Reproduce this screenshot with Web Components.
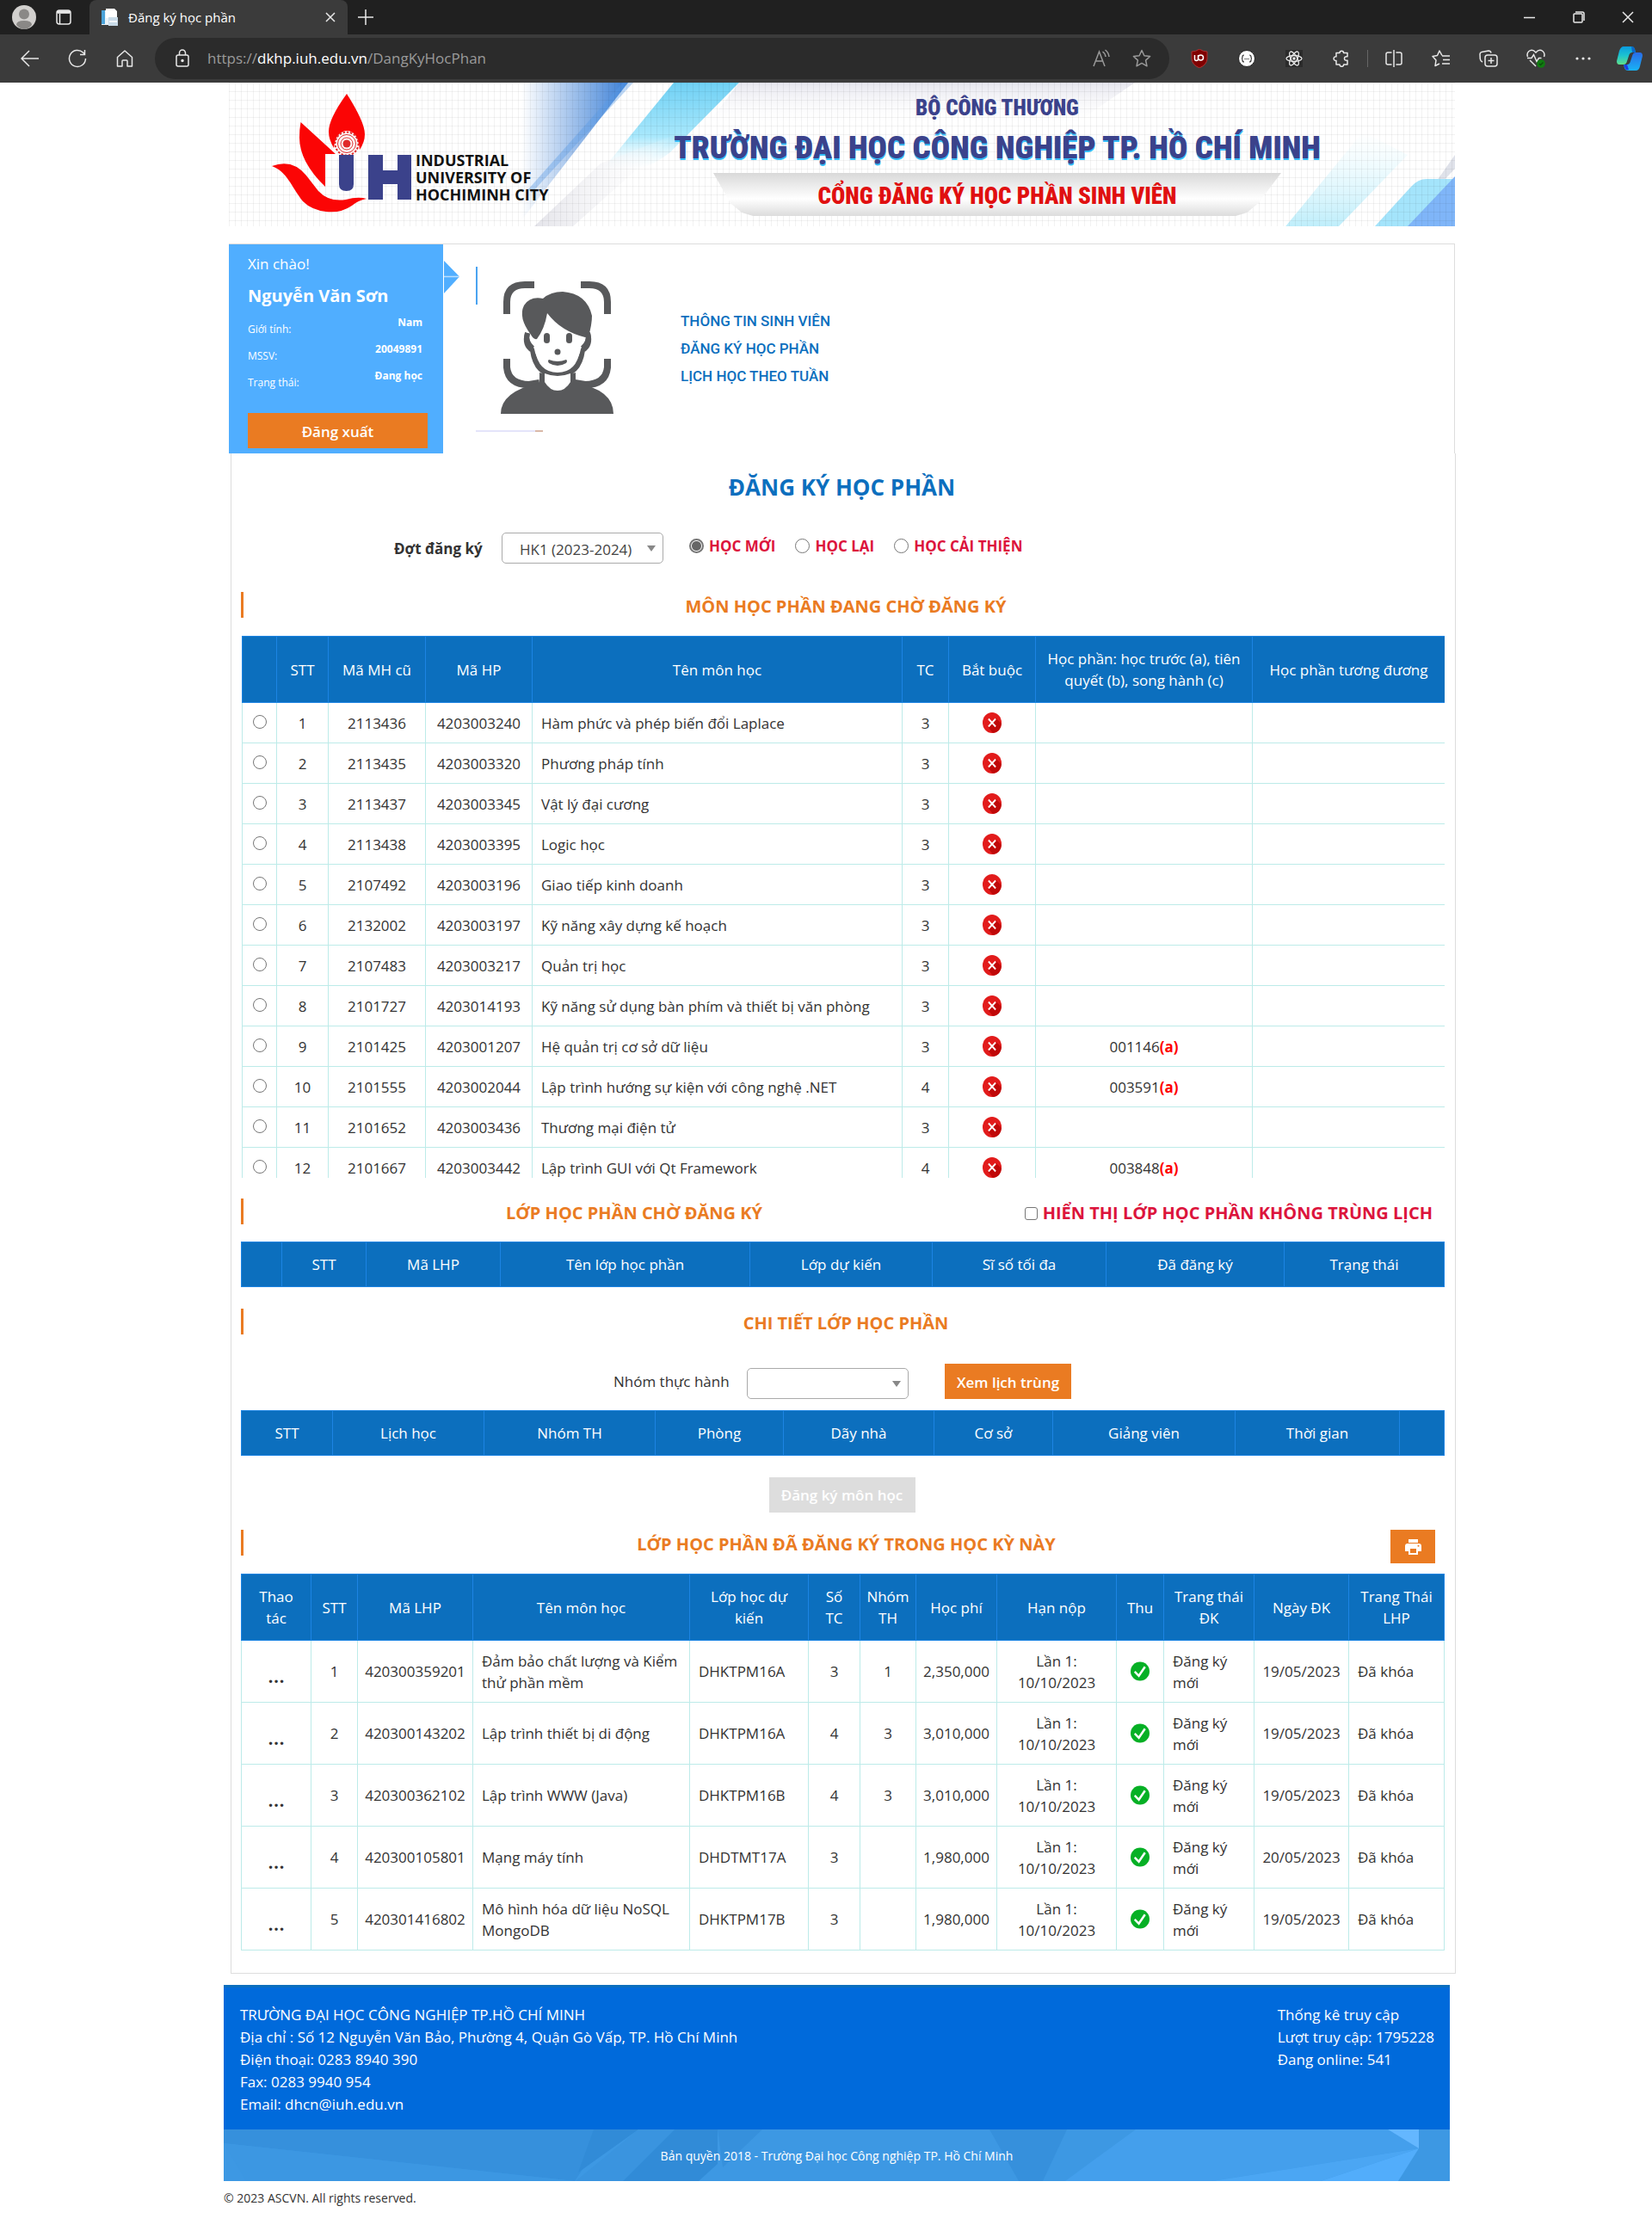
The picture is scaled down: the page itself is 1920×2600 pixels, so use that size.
<!DOCTYPE html>
<html lang="vi">
<head>
<meta charset="utf-8">
<title>Đăng ký học phần</title>
<meta name="viewport" content="width=device-width, initial-scale=1">
<style>
  body { margin: 0; background: #fff; color: #333; font: 17px/25px "Open Sans", "Noto Sans", sans-serif; }
  .page { padding-left: 32px; }
  .site { max-width: 1432px; margin: 0 auto; }
</style>
</head>
<body>
<browser-bar></browser-bar>
<div class="page">
  <div class="site">
    <uni-banner></uni-banner>
    <student-panel name="Nguyễn Văn Sơn" gender="Nam" code="20049891" status="Đang học"></student-panel>
    <main-frame>
      <page-title>ĐĂNG KÝ HỌC PHẦN</page-title>
      <term-filter></term-filter>
      <section-title>MÔN HỌC PHẦN ĐANG CHỜ ĐĂNG KÝ</section-title>
      <course-list></course-list>
      <section-title class="split">LỚP HỌC PHẦN CHỜ ĐĂNG KÝ
        <overlap-toggle slot="end">HIỂN THỊ LỚP HỌC PHẦN KHÔNG TRÙNG LỊCH</overlap-toggle>
      </section-title>
      <class-list></class-list>
      <section-title class="after-grid">CHI TIẾT LỚP HỌC PHẦN</section-title>
      <group-filter></group-filter>
      <class-detail></class-detail>
      <register-action>Đăng ký môn học</register-action>
      <section-title class="compact">LỚP HỌC PHẦN ĐÃ ĐĂNG KÝ TRONG HỌC KỲ NÀY
        <print-button slot="end"></print-button>
      </section-title>
      <registered-list></registered-list>
    </main-frame>
    <site-footer></site-footer>
  </div>
</div>

<script>
const define = (name, html, setup) => {
  const template = document.createElement('template');
  template.innerHTML = html;
  customElements.define(name, class extends HTMLElement {
    constructor() {
      super();
      this.attachShadow({ mode: 'open' }).append(template.content.cloneNode(true));
    }
    connectedCallback() { if (setup) setup(this, this.shadowRoot); }
  });
};

/* ---------- browser window ---------- */
define('browser-bar', `
<style>
  :host { display: block; background: #3b3b3b; color: #fff; font-size: 15px; line-height: 20px; }
  svg { display: block; fill: none; stroke: #e8e8e8; stroke-width: 1.5; flex: none; }
  button { all: unset; display: flex; align-items: center; justify-content: center; flex: none; }
  .tabs { display: flex; height: 40px; background: #202020; align-items: center; }
  .lead { display: flex; width: 104px; gap: 23px; padding-left: 14px; box-sizing: border-box; align-items: center; }
  .tab { display: flex; align-items: center; width: 300px; height: 40px; box-sizing: border-box; padding: 0 12px 0 13px; gap: 12px; background: #3b3b3b; border-radius: 8px 8px 0 0; }
  .tab span { flex: 1; }
  .new { width: 42px; height: 40px; }
  .win { margin-left: auto; display: flex; }
  .win button { width: 57px; height: 40px; }
  .tools { display: flex; align-items: center; height: 56px; }
  .nav { display: flex; width: 180px; box-sizing: border-box; padding-left: 7px; }
  .nav button { width: 55px; height: 48px; }
  form { display: flex; flex: 1; min-width: 0; height: 48px; margin: 0; border-radius: 24px; background: #2b2b2b; align-items: center; padding: 0 21px 0 20px; box-sizing: border-box; }
  .url { flex: 1; min-width: 0; display: flex; margin-left: 17px; font-size: 17px; line-height: 24px; color: #9a9a9a; }
  .url b { font-weight: 400; color: #fff; }
  .mini { display: flex; gap: 24px; }
  .mini svg { stroke: #9a9a9a; }
  .ext { display: flex; align-items: center; padding-left: 7px; }
  .ext button { width: 55px; height: 48px; }
  .ext .edge { width: 53px; }
  .sep { width: 1px; height: 20px; background: #666; margin: 0 2px 0 3px; }
</style>
<div class="tabs">
  <div class="lead">
    <svg width="28" height="28" viewBox="0 0 28 28" stroke="none"><circle cx="14" cy="14" r="14" fill="#d2d0ce" stroke="none"/><circle cx="14" cy="10.500" r="6" fill="#8a8886" stroke="none"/><path d="M5 23q0-5 9-5t9 5q-4 5-9 5t-9-5z" fill="#8a8886" stroke="none"/></svg>
    <svg width="18" height="18" viewBox="0 0 18 18"><rect x="1" y="1" width="16" height="16" rx="3"/><path d="M1 3.500h16M4.500 5v12" stroke-width="1.500"/><path d="M2 3h14" stroke-width="3.500"/></svg>
  </div>
  <div class="tab">
    <svg width="20" height="20" viewBox="0 0 20 20" stroke="none"><path d="M1 2h15v17H1z" fill="#e9f2f8" stroke="none"/><path d="M1 2h4v16H1z" fill="#4ba3d9" stroke="none"/><path d="M6 0h10l3 3v8H6z" fill="#fff" stroke="none"/><path d="M9 10h11v10H9z" fill="#c9dbe8" stroke="none"/><path d="M10 15h9" stroke="#fff"/></svg>
    <span>Đăng ký học phần</span>
    <button aria-label="Đóng thẻ"><svg width="16" height="16" viewBox="0 0 16 16"><path d="M3 3l10 10M13 3L3 13"/></svg></button>
  </div>
  <button class="new" aria-label="Thẻ mới"><svg width="18" height="18" viewBox="0 0 18 18"><path d="M9 0v18M0 9h18"/></svg></button>
  <div class="win">
    <button aria-label="Thu nhỏ"><svg width="13" height="13" viewBox="0 0 13 13"><path d="M0 6.500h13"/></svg></button>
    <button aria-label="Phóng to"><svg width="14" height="14" viewBox="0 0 14 14"><rect x="1" y="3" width="10" height="10" rx="1"/><path d="M3 1h8q2 0 2 2v8"/></svg></button>
    <button aria-label="Đóng"><svg width="14" height="14" viewBox="0 0 14 14"><path d="M1 1l12 12M13 1L1 13"/></svg></button>
  </div>
</div>
<div class="tools">
  <div class="nav">
    <button aria-label="Quay lại"><svg width="22" height="20" viewBox="0 0 22 20"><path d="M21 10H1M10 1l-9 9 9 9"/></svg></button>
    <button aria-label="Tải lại"><svg width="22" height="22" viewBox="0 0 22 22"><path d="M20.500 11a9.500 9.500 0 1 1-3-7l2 2M19.500 1v5.500H14"/></svg></button>
    <button aria-label="Trang chủ"><svg width="20" height="20" viewBox="0 0 20 20"><path d="M1.500 8.500 10 1l8.500 7.500V19H13v-6q0-1-1-1H8q-1 0-1 1v6H1.500z" stroke-linejoin="round"/></svg></button>
  </div>
  <form onsubmit="return false">
    <svg width="24" height="22" viewBox="0 0 24 22"><rect x="5" y="7" width="14" height="13" rx="2"/><path d="M8.500 7V4.500a3.500 3.500 0 0 1 7 0V7"/><circle cx="12" cy="13.500" r="1" fill="#e8e8e8"/></svg>
    <div class="url"><span>https://</span><b>dkhp.iuh.edu.vn</b><span>/DangKyHocPhan</span></div>
    <div class="mini">
      <svg width="25" height="22" viewBox="0 0 25 22"><path d="M4 20 10.500 3 17 20M6.500 14h8"/><path d="M14.500 3q3 2 3.500 6M17.500 1q4 3 4.500 8"/></svg>
      <svg width="22" height="22" viewBox="0 0 22 22"><path d="M11 1.500l2.900 6.200 6.700.8-5 4.600 1.400 6.700-6-3.400-6 3.400 1.400-6.700-5-4.600 6.700-.8z" stroke-linejoin="round"/></svg>
    </div>
  </form>
  <div class="ext">
    <button aria-label="uBlock"><svg width="20" height="22" viewBox="0 0 20 22"><path d="M10 0q4 3 9 3v8q0 7-9 11-9-4-9-11V3q5 0 9-3z" fill="#800000" stroke="#a33" stroke-width="1"/><path d="M4.500 7v4.500q0 2 2 2t2-2V7M8.500 10a3 3 0 1 0 6 0 3 3 0 1 0-6 0" stroke="#fff" stroke-width="1.500"/></svg></button>
    <button aria-label="Json"><svg width="20" height="20" viewBox="0 0 20 20"><circle cx="10" cy="10" r="9.500" fill="#fff" stroke="#222" stroke-width="1"/><path d="M7 6q-2 0-2 2t-1 2q1 0 1 2t2 2M13 6q2 0 2 2t1 2q-1 0-1 2t-2 2" stroke="#333" stroke-width="1.200"/><path d="M7.500 10.500h5" stroke="#333" stroke-dasharray="1 1"/></svg></button>
    <button aria-label="React"><svg width="20" height="20" viewBox="0 0 20 20"><rect width="20" height="20" fill="#2b2b2b" stroke="none"/><g stroke-width="1.300"><ellipse cx="10" cy="10" rx="9" ry="3.500"/><ellipse cx="10" cy="10" rx="9" ry="3.500" transform="rotate(60 10 10)"/><ellipse cx="10" cy="10" rx="9" ry="3.500" transform="rotate(120 10 10)"/></g><circle cx="10" cy="10" r="1.700" fill="#e8e8e8" stroke="none"/></svg></button>
    <button aria-label="Tiện ích"><svg width="20" height="20" viewBox="0 0 20 20"><path d="M4 3.500h4a2.300 2.300 0 1 1 4.600 0H17v4.300q-3.500-.5-3.500 2.200t3.500 2.200V17h-4.300a2.300 2.300 0 1 1-4.700 0H4v-4.500a2.400 2.400 0 1 1 0-4.700z" stroke-linejoin="round"/></svg></button>
    <span class="sep"></span>
    <button aria-label="Chia màn hình"><svg width="20" height="20" viewBox="0 0 20 20"><path d="M7.500 3H3q-2 0-2 2v10q0 2 2 2h4.500M12.500 3H17q2 0 2 2v10q0 2-2 2h-4.500M10 0v20"/></svg></button>
    <button aria-label="Yêu thích"><svg width="22" height="20" viewBox="0 0 22 20"><path d="M12 6.500 9 1 6.500 6.500 1 7.500l4 4.500-1 6.500 5-2.500M12 7h9M13 11.500h8M12 16h9" stroke-linejoin="round"/></svg></button>
    <button aria-label="Bộ sưu tập"><svg width="22" height="20" viewBox="0 0 22 20"><rect x="7" y="6" width="14" height="13" rx="3"/><path d="M14 9v7M10.500 12.500h7M4 14Q1.500 13 1.300 10.500L1 5q0-2 2-2.500L11 1q2.500 0 3 2.500"/></svg></button>
    <button aria-label="Hiệu suất"><svg width="22" height="22" viewBox="0 0 22 22"><path d="M1.500 9Q0 5 3 2.500 7-.5 11 4q4-4.500 8-1.500 3 2.500 1.500 6.500M4 13l7 7M1 10.500h5l2.500-4 3.500 8 2.500-4h3"/><circle cx="17" cy="17" r="4.800" fill="#107c10" stroke="none"/><path d="M15 17l1.500 1.500 3-3" stroke="#0a4f0a"/></svg></button>
    <button aria-label="Khác"><svg width="18" height="4" viewBox="0 0 18 4"><g fill="#e8e8e8" stroke="none"><circle cx="2" cy="2" r="1.600"/><circle cx="9" cy="2" r="1.600"/><circle cx="16" cy="2" r="1.600"/></g></svg></button>
    <button class="edge" aria-label="Copilot"><svg width="30" height="28" viewBox="0 0 30 28" stroke="none">
      <defs><linearGradient id="c1" x1="0" y1="0" x2="0" y2="1"><stop offset="0" stop-color="#0a9be0"/><stop offset=".5" stop-color="#1cc3d0"/><stop offset="1" stop-color="#5fe08a"/></linearGradient><linearGradient id="c2" x1="0" y1="0" x2="0" y2="1"><stop offset="0" stop-color="#2a6be8"/><stop offset="1" stop-color="#18b4f5"/></linearGradient></defs>
      <path d="M8 0h9q3 0 4 3l1 4h-4q-3 0-4 4l-2 6q-1 4-4 4H3q-3 0-3-4L3 5q2-5 5-5z" fill="url(#c1)" stroke="none"/><path d="M22 28h-9q-3 0-4-3l-1-4h4q3 0 4-4l2-6q1-4 4-4h5q3 0 3 4l-3 12q-1 5-5 5z" fill="url(#c2)" stroke="none"/><path d="M8 21h4l2 6q-3 1-4-1z" fill="#1b3fe0" stroke="none"/><path d="M17 0q3 0 4 3l1 4h-4z" fill="#0b66c9" stroke="none"/></svg></button>
  </div>
</div>`);

/* ---------- banner ---------- */
define('uni-banner', `
<style>
  :host { display: flex; position: relative; height: 167px; margin: 0 1px 0 6px; overflow: hidden; }
  .art { position: absolute; inset: 0; width: 100%; height: 100%; }
  .logo { position: relative; flex: 0 0 521px; display: flex; align-items: center; padding-left: 50px; box-sizing: border-box; }
  .logo svg { display: block; flex: none; }
  .words { color: #111; font: 700 18px/20px "Open Sans", sans-serif; margin: 53px 0 0 5px; }
  .text { position: relative; flex: 0 0 744px; min-width: 0; display: flex; flex-direction: column; align-items: center; white-space: nowrap; font-family: "Roboto Condensed", "Roboto", sans-serif; font-weight: 900; color: #3b428b; }
  .ministry { font-size: 25px; line-height: 34px; margin-top: 13px; }
  h1 { font-size: 37px; line-height: 50px; margin: 4px 0 0; font-weight: 900; text-shadow: 0 2px 0 #35bdf8; }
  .band { width: 660px; height: 50px; line-height: 54px; margin-top: 4px; font-size: 27px; text-align: center; color: #e01010; background: linear-gradient(#d9d9d9, #fff 60%, #dcdcdc); clip-path: polygon(0 0, 100% 0, 96% 70%, 94% 92%, 92% 100%, 7% 100%, 5% 92%, 3% 70%); }
</style>
<svg class="art" viewBox="0 0 1425 167" preserveAspectRatio="none">
  <defs>
    <pattern id="grid" width="14" height="10" patternUnits="userSpaceOnUse"><path d="M0 .5h14M.5 0v10M7.500 0v10" stroke="#000" stroke-opacity=".05" fill="none"/></pattern>
    <linearGradient id="b1" x1="0" x2="1" y1="0" y2="0"><stop offset="0" stop-color="#3b7fd6" stop-opacity="0"/><stop offset="1" stop-color="#3b7fd6"/></linearGradient>
    <linearGradient id="b2" x1="0" x2="0" y1="0" y2="1"><stop offset="0" stop-color="#6fd0f4"/><stop offset=".6" stop-color="#a9e8fc"/><stop offset="1" stop-color="#fff" stop-opacity="0"/></linearGradient>
    <linearGradient id="b3" x1="0" x2="0" y1="0" y2="1"><stop offset="0" stop-color="#e6e6ee"/><stop offset="1" stop-color="#fff" stop-opacity="0"/></linearGradient>
    <linearGradient id="b4" x1="0" x2="1" y1="0" y2="0"><stop offset="0" stop-color="#e4e4ea"/><stop offset="1" stop-color="#fff" stop-opacity="0"/></linearGradient>
    <linearGradient id="b5" x1="0" x2="0" y1="0" y2="1"><stop offset="0" stop-color="#dff8fe" stop-opacity="0"/><stop offset="1" stop-color="#bfeefb"/></linearGradient>
  </defs>
  <rect width="1425" height="167" fill="#fff"/>
  <path d="M593 0h460L980 50H555z" fill="url(#b3)"/>
  <path d="M340 0H464L340 160z" fill="url(#b1)"/>
  <path d="M458 0h12L352 128l-4-4z" fill="#5a9be6" opacity=".4"/>
  <path d="M517 0h76L513 81Q480 108 432 104z" fill="url(#b2)"/>
  <path d="M432 94 355 167h45L520 60z" fill="url(#b4)"/>
  <path d="M1318 57l52 27-80 83h-62z" fill="url(#b5)"/>
  <path d="M1318 57l-90 110h-8l88-110z" fill="#fff"/>
  <path d="M1425 84v16l-42 44z" fill="#dfe2ea"/>
  <path d="M1332 167l42-46q8-9 18-9h33v55z" fill="#a4e4fb"/>
  <path d="M1425 109v58h-55z" fill="#7fb5f8"/>
  <rect width="1425" height="167" fill="url(#grid)"/>
</svg>
<div class="logo">
  <svg width="162" height="167" viewBox="50 0 162 167">
    <path d="M137 13Q158 46 158 60 158 69 152 78 150 56 137 56 124 57 122 76 116 66 116 57 116 42 137 13z" fill="#fb0505"/>
    <path d="M83.500 46 124 83H112V121Q82 92 82 64 82 54 83.500 46z" fill="#fb0505"/>
    <path d="M50 97Q74 88 90 108L104 126Q116 139 136 136 150 132 160 135 150 137 143 143 130 152 113 150 96 148 86 138C72 120 68 104 50 97z" fill="#fb0505"/>
    <circle cx="137" cy="71" r="13.500" fill="none" stroke="#e02a2a" stroke-width="2" stroke-dasharray="2.500 1.700"/>
    <circle cx="137" cy="71" r="10.500" fill="none" stroke="#e02a2a"/><circle cx="137" cy="71" r="7" fill="none" stroke="#e02a2a"/><circle cx="137" cy="71" r="4.500" fill="#e02a2a"/>
    <path d="M123 84h28v4h-28z" fill="#fff"/>
    <path d="M128 84h17v34q0 8-8.500 8t-8.500-8z" fill="#3b428b"/>
    <path d="M162 84h17v18h17V84h16v52h-16v-18h-17v18h-17z" fill="#3b428b"/>
  </svg>
  <div class="words">INDUSTRIAL<br>UNIVERSITY OF<br>HOCHIMINH CITY</div>
</div>
<div class="text">
  <div class="ministry">BỘ CÔNG THƯƠNG</div>
  <h1>TRƯỜNG ĐẠI HỌC CÔNG NGHIỆP TP. HỒ CHÍ MINH</h1>
  <div class="band">CỔNG ĐĂNG KÝ HỌC PHẦN SINH VIÊN</div>
</div>`);

/* ---------- student panel ---------- */
define('student-panel', `
<style>
  :host { display: flex; align-items: stretch; margin: 20px 1px 0 6px; border-top: 1px solid #ddd; border-right: 1px solid #ddd; height: 243px; }
  .card { flex: 0 0 249px; box-sizing: border-box; padding: 10px 18px 6px 22px; background: #50aeff; color: #fff; display: flex; flex-direction: column; }
  .hello { font-size: 17px; line-height: 26px; }
  .name { font-size: 20px; line-height: 28px; font-weight: 700; margin: 10px 0 13px; }
  dl { margin: 0; padding-right: 6px; font-size: 12px; }
  dl div { display: flex; justify-content: space-between; height: 31px; }
  dt { line-height: 24px; }
  dd { margin: 0; line-height: 8px; font-weight: 700; }
  button { border: 0; margin-top: auto; height: 41px; padding: 3px 0 0; background: #ea7b22; color: #fff; font: 600 17px/20px "Open Sans", "Noto Sans", sans-serif; }
  .arrow { margin-top: 19px; flex: none; }
  .rail { display: flex; flex-direction: column; justify-content: space-between; flex: 0 0 78px; margin: 26px 0 25px 19px; }
  .rail i { width: 2px; height: 44px; background: #4aa3f0; }
  .rail s { height: 2px; background: linear-gradient(90deg, #e4e4fa 88%, #d9b9a8 88%); }
  .avatar { flex: none; margin: 43px 0 0 -49px; }
  nav { display: flex; flex-direction: column; gap: 8px; margin: 77px 0 0 78px; }
  a { color: #0c6fbe; text-decoration: none; font: 500 17px/24px "Roboto", sans-serif; }
</style>
<div class="card">
  <div class="hello">Xin chào!</div>
  <div class="name"></div>
  <dl><div><dt>Giới tính:</dt><dd class="gender"></dd></div><div><dt>MSSV:</dt><dd class="code"></dd></div><div><dt>Trạng thái:</dt><dd class="status"></dd></div></dl>
  <button>Đăng xuất</button>
</div>
<svg class="arrow" width="19" height="38" viewBox="0 0 19 38"><path d="M1 0l18 18.500L1 38z" fill="#50aeff"/><path d="M1 18.500h18" stroke="#b9deff" stroke-width="1.500"/></svg>
<div class="rail"><i></i><s></s></div>
<svg class="avatar" width="131" height="154" viewBox="0 0 131 154">
  <g fill="none" stroke="#58595b" stroke-width="8">
    <path d="M7 38V24Q7 4 28 4h11M93 4h10q21 0 21 20v14M7 90v10q2 20 26 20l12-2M124 90v10q-2 20-26 20l-12-2"/>
    <path d="M31 60q-4 14 6 20 4 29 29 29t29-29q10-6 6-20" stroke-width="6"/>
  </g>
  <path d="M0 154q0-26 45-36V106q20 8 42 0v12q44 8 44 36z" fill="#58595b"/>
  <path d="M51 107q15 6 30 0v10q-6 10-15 10t-15-10z" fill="#fff"/>
  <path d="M37 66V50h58v16q-3 38-29 38T37 66z" fill="#fff"/>
  <path d="M42 67Q38 68 35 62 20 42 27 28q7-11 22-8Q58 12 72 12q28 2 34 28 0 10-4 24l-4 1Q70 58 54 37 51 55 42 67z" fill="#58595b"/>
  <path d="M31 60q-3 10 6 18M101 60q3 10-6 18" fill="none" stroke="#58595b" stroke-width="6"/>
  <rect x="50" y="60" width="7" height="12" rx="3.500" fill="#58595b"/><rect x="76" y="60" width="7" height="12" rx="3.500" fill="#58595b"/>
  <circle cx="66" cy="82" r="3.500" fill="#58595b"/><path d="M56 91q10 4 20 0 2 1 0 4-10 6-20 0-2-3 0-4z" fill="#58595b"/>
</svg>
<nav><a href="#">THÔNG TIN SINH VIÊN</a><a href="#">ĐĂNG KÝ HỌC PHẦN</a><a href="#">LỊCH HỌC THEO TUẦN</a></nav>`,
(host, root) => {
  for (const key of ['name', 'gender', 'code', 'status']) root.querySelector('.' + key).textContent = host.getAttribute(key);
});

/* ---------- page frame and headings ---------- */
define('main-frame', `
<style>:host { display: block; margin: 0 0 0 8px; padding: 0 14px 26px 11px; border: 1px solid #ddd; border-top: 0; }</style>
<slot></slot>`);

define('page-title', `
<style>:host { display: block; padding-top: 20px; } h2 { margin: 0; text-align: center; color: #0c6fbe; font-size: 26px; line-height: 38px; font-weight: 700; }</style>
<h2><slot></slot></h2>`);

define('section-title', `
<style>
  :host { display: grid; grid-template-columns: 1fr; align-items: start; margin-top: 33px; height: 51px; }
  :host(.after-grid) { margin-top: 25px; height: 64px; }
  :host(.split) { grid-template-columns: 905px 1fr; margin-top: 24px; height: 50px; }
  :host(.compact) { margin-top: 20px; height: 51px; grid-template-columns: 1fr auto; }
  h3 { margin: 0; padding-left: 6px; border-left: 3px solid #ea7b22; text-align: center; color: #ea7b22; font-size: 20px; line-height: 34px; height: 30px; font-weight: 700; }
  :host(.compact) h3 { padding-left: 68px; }
</style>
<h3><slot></slot></h3><slot name="end"></slot>`);

const pickStyle = `
  label { display: flex; align-items: center; color: #dc143c; font-weight: 700; }
  input { appearance: none; box-sizing: border-box; width: 17px; height: 17px; margin: 0; border: 1px solid #767676; background: #fff; flex: none; }
  input[type=radio] { border-radius: 50%; }
  input[type=radio]:checked { border-width: 2px; background: radial-gradient(circle, #666 5px, #fff 6px); }
`;
const selectStyle = `
  select { appearance: none; box-sizing: border-box; width: 188px; height: 36px; padding: 4px 30px 0 20px; border: 1px solid #aaa; border-radius: 5px; color: #444; background: #fff; font: 17px/24px "Open Sans", "Noto Sans", sans-serif; }
  .select { position: relative; display: block; }
  .select::after { content: ""; position: absolute; right: 9px; top: 15px; border: 5px solid transparent; border-top: 7px solid #888; border-bottom: 0; pointer-events: none; }
`;

define('term-filter', `
<style>
  :host { display: flex; align-items: center; margin-top: 34px; height: 36px; padding-left: 178px; }
  ${pickStyle}${selectStyle}
  .term { color: #333; margin-right: 22px; width: 103px; white-space: nowrap; }
  fieldset { display: flex; gap: 23px; border: 0; margin: 0 0 6px 30px; padding: 0; }
  fieldset label { gap: 6px; }
</style>
<label class="term" for="term">Đợt đăng ký</label>
<span class="select"><select id="term"><option>HK1 (2023-2024)</option></select></span>
<fieldset>
  <label><input type="radio" name="kind" checked>HỌC MỚI</label>
  <label><input type="radio" name="kind">HỌC LẠI</label>
  <label><input type="radio" name="kind">HỌC CẢI THIỆN</label>
</fieldset>`);

define('overlap-toggle', `
<style>
  :host { display: flex; justify-content: flex-end; padding-right: 12px; white-space: nowrap; }
  ${pickStyle}
  label { gap: 6px; font-size: 20px; line-height: 34px; }
  input { border-radius: 3px; width: 15px; height: 15px; }
</style>
<label><input type="checkbox"><span><slot></slot></span></label>`);

define('group-filter', `
<style>
  :host { display: flex; align-items: flex-end; height: 41px; padding: 0 0 13px 433px; }
  ${selectStyle}
  label { width: 155px; line-height: 41px; }
  button { height: 41px; width: 147px; margin-left: 42px; padding: 2px 0 0; border: 0; background: #ea7b22; color: #fff; font: 600 17px/20px "Open Sans", "Noto Sans", sans-serif; }
</style>
<label for="group">Nhóm thực hành</label>
<span class="select"><select id="group"><option></option></select></span>
<button>Xem lịch trùng</button>`);

define('register-action', `
<style>
  :host { display: flex; justify-content: center; padding-top: 25px; }
  button { height: 41px; width: 170px; border: 0; padding: 1px 0 0; background: #ddd; color: #fff; font: 600 17px/20px "Open Sans", "Noto Sans", sans-serif; }
</style>
<button disabled><slot></slot></button>`);

define('print-button', `
<style>
  :host { display: block; padding-right: 9px; }
  button { display: flex; align-items: center; justify-content: center; width: 52px; height: 39px; border: 0; padding: 0; background: #ea7b22; }
</style>
<button aria-label="In"><svg width="19" height="18" viewBox="0 0 19 18"><path d="M4 0h11v4H4zM3 5h13q3 0 3 3v6h-4v4H4v-4H0V8q0-3 3-3z" fill="#fff"/><path d="M6 11h7v5H6z" fill="#ea7b22"/><circle cx="15.500" cy="7.800" r="1" fill="#ea7b22"/></svg></button>`);

/* ---------- tables ---------- */
const gridStyle = `
  :host { display: block; }
  table { width: 100%; border-collapse: collapse; table-layout: fixed; font-size: 17px; line-height: 25px; }
  th { background: #0c6fbe; color: #fff; font-weight: 400; border: 1px solid #1c84e3; padding: 0 6px; height: 51px; }
  td { border: 1px solid #bdebe9; padding: 0 10px; text-align: center; color: #333; }
  td.l { text-align: left; }
  svg { display: block; margin: 0 auto; }
`;
const cols = widths => '<colgroup>' + widths.map(w => `<col style="width:${w}px">`).join('') + '</colgroup>';
const head = names => '<thead><tr>' + names.map(n => `<th>${n}</th>`).join('') + '</tr></thead>';

const cross = `<svg width="22" height="24" viewBox="0 0 24 24" preserveAspectRatio="none"><circle cx="12" cy="12" r="12" fill="#e21b1b"/><path d="M17 7l7 6q-1 10-11 11l-6-7z" fill="#c00808"/><path d="M7.500 7.500l9 9M16.500 7.500l-9 9" stroke="#fff" stroke-width="2"/></svg>`;
const tick = `<svg width="22" height="23" viewBox="0 0 23 23"><circle cx="11.500" cy="11.500" r="11.500" fill="#06b025"/><path d="M5 12l5 5 7.500-11" fill="none" stroke="#fff" stroke-width="2.600"/></svg>`;

const courses = [
  ['2113436', '4203003240', 'Hàm phức và phép biến đổi Laplace', 3, ''],
  ['2113435', '4203003320', 'Phương pháp tính', 3, ''],
  ['2113437', '4203003345', 'Vật lý đại cương', 3, ''],
  ['2113438', '4203003395', 'Logic học', 3, ''],
  ['2107492', '4203003196', 'Giao tiếp kinh doanh', 3, ''],
  ['2132002', '4203003197', 'Kỹ năng xây dựng kế hoạch', 3, ''],
  ['2107483', '4203003217', 'Quản trị học', 3, ''],
  ['2101727', '4203014193', 'Kỹ năng sử dụng bàn phím và thiết bị văn phòng', 3, ''],
  ['2101425', '4203001207', 'Hệ quản trị cơ sở dữ liệu', 3, '001146'],
  ['2101555', '4203002044', 'Lập trình hướng sự kiện với công nghệ .NET', 4, '003591'],
  ['2101652', '4203003436', 'Thương mại điện tử', 3, ''],
  ['2101667', '4203003442', 'Lập trình GUI với Qt Framework', 4, '003848'],
];
define('course-list', `
<style>
  ${gridStyle}
  :host { height: 630px; overflow: hidden; margin: 0 -2px 0 1px; padding-right: 1px; }
  th { height: 76px; }
  td { height: 46px; }
  tr td:first-child { padding: 0; }
  input { appearance: none; display: block; box-sizing: border-box; width: 16px; height: 16px; margin: -3px auto 0; border: 1px solid #767676; border-radius: 50%; background: #fff; }
  b { color: #f00; }
</style>
<table>${cols([40, 60, 113, 124, 430, 54, 101, 252, 224])}
${head(['', 'STT', 'Mã MH cũ', 'Mã HP', 'Tên môn học', 'TC', 'Bắt buộc', 'Học phần: học trước (a), tiên quyết (b), song hành (c)', 'Học phần tương đương'])}
<tbody>${courses.map(([a, b, c, n, p], i) => `<tr><td><input type="radio" name="course" aria-label="${c}"></td><td>${i + 1}</td><td>${a}</td><td>${b}</td><td class="l">${c}</td><td>${n}</td><td>${cross}</td><td>${p && p + '<b>(a)</b>'}</td><td></td></tr>`).join('')}</tbody></table>`);

define('class-list', `<style>${gridStyle}</style>
<table>${cols([47, 98, 156, 290, 212, 202, 207, 186])}${head(['', 'STT', 'Mã LHP', 'Tên lớp học phần', 'Lớp dự kiến', 'Sĩ số tối đa', 'Đã đăng ký', 'Trạng thái'])}</table>`);

define('class-detail', `<style>${gridStyle}</style>
<table>${cols([106, 176, 199, 149, 175, 138, 212, 191, 52])}${head(['STT', 'Lịch học', 'Nhóm TH', 'Phòng', 'Dãy nhà', 'Cơ sở', 'Giảng viên', 'Thời gian', ''])}</table>`);

const registered = [
  ['420300359201', 'Đảm bảo chất lượng và Kiểm thử phần mềm', 'DHKTPM16A', 3, 1, '2,350,000', '19/05/2023'],
  ['420300143202', 'Lập trình thiết bị di động', 'DHKTPM16A', 4, 3, '3,010,000', '19/05/2023'],
  ['420300362102', 'Lập trình WWW (Java)', 'DHKTPM16B', 4, 3, '3,010,000', '19/05/2023'],
  ['420300105801', 'Mạng máy tính', 'DHDTMT17A', 3, '', '1,980,000', '20/05/2023'],
  ['420301416802', 'Mô hình hóa dữ liệu NoSQL MongoDB', 'DHKTPM17B', 3, '', '1,980,000', '19/05/2023'],
];
define('registered-list', `
<style>
  ${gridStyle}
  th { height: 76px; padding: 0 9px; }
  td { height: 71px; }
  td.n { padding: 0 2px; }
  th.n { padding: 0; }
  button { all: unset; display: block; margin: 0 auto; padding-top: 8px; font-size: 24px; font-weight: 600; line-height: 30px; }
</style>
<table>${cols([81, 54, 134, 252, 138, 60, 65, 94, 139, 55, 105, 110, 111])}
${head(['Thao tác', 'STT', 'Mã LHP', 'Tên môn học', 'Lớp học dự kiến', 'Số TC', 'Nhóm TH', 'Học phí', 'Hạn nộp', 'Thu', 'Trang thái ĐK', 'Ngày ĐK', 'Trang Thái LHP']).replace('<th>Nhóm', '<th class="n">Nhóm')}
<tbody>${registered.map(([a, b, c, n, g, f, d], i) => `<tr><td class="n"><button aria-label="Thao tác">...</button></td><td>${i + 1}</td><td class="n">${a}</td><td class="l">${b}</td><td class="l">${c}</td><td>${n}</td><td>${g}</td><td class="n">${f}</td><td>Lần 1:<br>10/10/2023</td><td class="n">${tick}</td><td class="l">Đăng ký mới</td><td class="n">${d}</td><td class="l">Đã khóa</td></tr>`).join('')}</tbody></table>`);

/* ---------- footer ---------- */
define('site-footer', `
<style>
  :host { display: block; margin: 13px 7px 0 0; }
  .info { display: flex; justify-content: space-between; box-sizing: border-box; height: 168px; padding: 19px 18px 0 19px; border-top: 3px solid #0c6fbe; background: #006adb; color: #fff; }
  address { font-style: normal; line-height: 26px; }
  .copy { position: relative; height: 60px; background: #3d98e3; color: #fff; font-size: 14px; line-height: 62px; text-align: center; }
  .copy svg { position: absolute; inset: 0; width: 100%; height: 100%; }
  .copy span { position: relative; }
  p { margin: 7px 0 31px; font-size: 14px; line-height: 26px; }
</style>
<footer>
  <div class="info">
    <address>TRƯỜNG ĐẠI HỌC CÔNG NGHIỆP TP.HỒ CHÍ MINH<br>Địa chỉ : Số 12 Nguyễn Văn Bảo, Phường 4, Quận Gò Vấp, TP. Hồ Chí Minh<br>Điện thoại: 0283 8940 390<br>Fax: 0283 9940 954<br>Email: dhcn@iuh.edu.vn</address>
    <address>Thống kê truy cập<br>Lượt truy cập: 1795228<br>Đang online: 541</address>
  </div>
  <div class="copy">
    <svg viewBox="0 0 1425 60" preserveAspectRatio="none">
      <path d="M0 0h430l-12 45-10 15L0 16z" fill="#3690dc"/><path d="M0 16l408 44H26z" fill="#3c97e2"/>
      <path d="M430 0h52l-70 50z" fill="#318bd7"/><path d="M482 0h42l-60 60h-55z" fill="#3a94df"/><path d="M524 0h50v40l-22 20h-88z" fill="#318bd7"/><path d="M574 0h52l-46 44z" fill="#3690dc"/>
      <path d="M890 0h90l-28 60h-28z" fill="#3690dc"/><path d="M1060 0h293l36 22-240 38H978z" fill="#449fec"/><path d="M1389 22l-240 38h126z" fill="#4ba6f3"/><path d="M1389 22l-114 38h90z" fill="#52adfb"/><path d="M1353 0h36v22z" fill="#64b7ff"/>
    </svg>
    <span>Bản quyền 2018 - Trường Đại học Công nghiệp TP. Hồ Chí Minh</span>
  </div>
  <p>© 2023 ASCVN. All rights reserved.</p>
</footer>`);
</script>
</body>
</html>
